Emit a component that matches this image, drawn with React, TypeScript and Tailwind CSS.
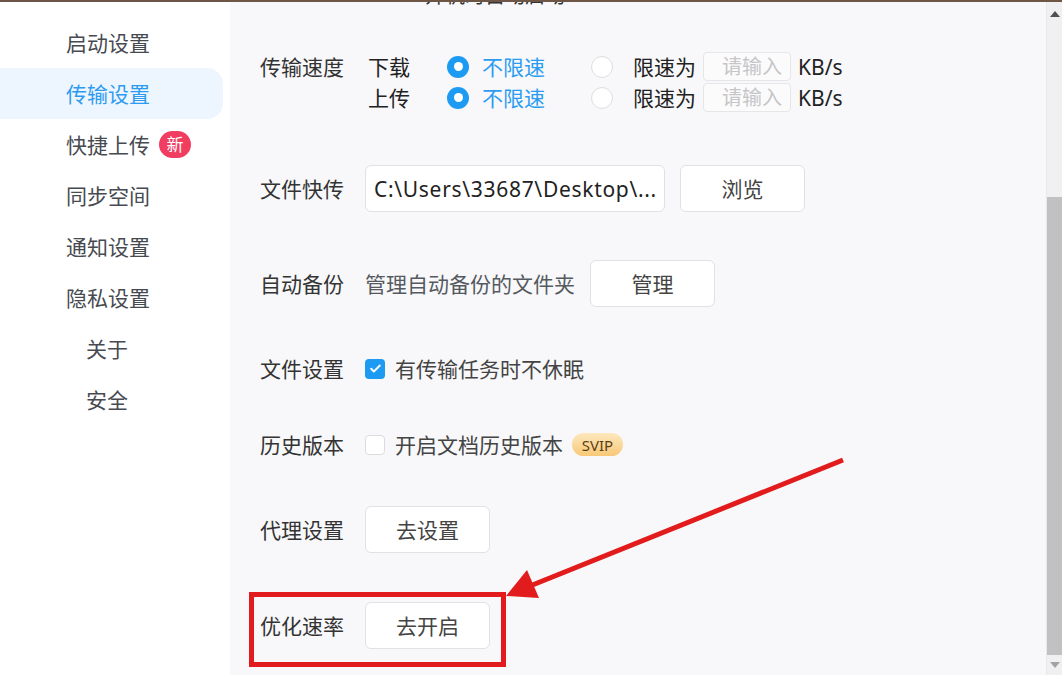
import React from 'react';

const font = { fontFamily: '"Noto Sans", "Noto Sans CJK SC", sans-serif' };

const navItems = [
  { label: '启动设置' },
  { label: '传输设置', active: true },
  { label: '快捷上传', badge: '新' },
  { label: '同步空间' },
  { label: '通知设置' },
  { label: '隐私设置' },
  { label: '关于', sub: true },
  { label: '安全', sub: true },
];

const Radio: React.FC<{ checked?: boolean }> = ({ checked }) =>
  checked ? (
    <span className="w-[22px] h-[22px] rounded-full bg-[#1d9bf3] flex items-center justify-center shrink-0">
      <span className="w-[9px] h-[9px] rounded-full bg-white" />
    </span>
  ) : (
    <span className="w-[22px] h-[22px] rounded-full bg-white border border-[#dedede] shrink-0" />
  );

const Button: React.FC<{ children: React.ReactNode }> = ({ children }) => (
  <div className="w-[125px] h-[47px] rounded-md border border-[#e1e1e4] bg-white flex items-center justify-center text-[21px] text-[#444]">
    {children}
  </div>
);

const Row: React.FC<{ label: string; className?: string; children?: React.ReactNode }> = ({ label, className, children }) => (
  <div className={`flex items-center h-[47px] ${className ?? ''}`}>
    <span className="w-[105px] shrink-0 text-[21px] text-[#333]">{label}</span>
    {children}
  </div>
);

const SpeedLine: React.FC<{ label: string }> = ({ label }) => (
  <div className="flex items-center h-[31px]">
    <span className="w-[79px] ml-[3px] text-[21px] text-[#222]">{label}</span>
    <Radio checked />
    <span className="w-[109px] ml-[13px] text-[21px] text-[#2b9cf2]">不限速</span>
    <Radio />
    <span className="ml-[20px] text-[21px] text-[#222]">限速为</span>
    <div className="ml-[7px] w-[88px] h-[29px] rounded-[4px] border border-[#e6e6e8] bg-[#fbfbfc] whitespace-nowrap pl-[18px] text-[20px] leading-[27px] text-[#c6c6c8]">
      请输入
    </div>
    <span className="ml-[7px] text-[21px] text-[#222]">KB/s</span>
  </div>
);

export default function App() {
  return (
    <div className="w-[1062px] h-[675px] relative overflow-hidden bg-white flex flex-col leading-[24px]" style={font}>
      <div className="h-[2px] bg-[#6e5646] shrink-0" />
      <div className="flex flex-1 min-h-0">
        {/* sidebar */}
        <div className="w-[230px] bg-white shrink-0 pt-[15px] pr-[7px]">
          {navItems.map((item) => (
            <div
              key={item.label}
              className={`h-[51px] flex items-center ${item.sub ? 'pl-[86px]' : 'pl-[66px]'} ${
                item.active ? 'bg-[#edf6ff] rounded-r-2xl text-[#2f9bf0]' : 'text-[#474a50]'
              } text-[21px]`}
            >
              {item.label}
              {item.badge && (
                <span className="ml-[9px] w-[32px] h-[27px] rounded-full bg-[#f13d60] text-white text-[17px] flex items-center justify-center">
                  {item.badge}
                </span>
              )}
            </div>
          ))}
        </div>

        {/* main */}
        <div className="flex-1 bg-[#f8f8fa] pl-[30px] overflow-hidden">
          <div className="mt-[-16px] h-[20px] pl-[165px] text-[20px] leading-[20px] text-[#333]">开机时自动启动</div>

          <div className="flex mt-[45px]">
            <span className="w-[105px] shrink-0 text-[21px] text-[#333] h-[31px] flex items-center">传输速度</span>
            <div className="flex flex-col">
              <SpeedLine label="下载" />
              <SpeedLine label="上传" />
            </div>
          </div>

          <Row label="文件快传" className="mt-[52px]">
            <div className="w-[300px] h-[47px] rounded-md border border-[#e1e1e4] bg-white flex items-center px-[8px] text-[21px] tracking-[0.7px] text-[#222] whitespace-nowrap overflow-hidden">
              C:\Users\33687\Desktop\...
            </div>
            <div className="ml-[15px]">
              <Button>浏览</Button>
            </div>
          </Row>

          <Row label="自动备份" className="mt-[48px]">
            <span className="text-[21px] text-[#555a60]">管理自动备份的文件夹</span>
            <div className="ml-[15px]">
              <Button>管理</Button>
            </div>
          </Row>

          <Row label="文件设置" className="mt-[38px]">
            <span className="w-[20px] h-[20px] rounded-[4px] bg-[#1d9bf3] flex items-center justify-center">
              <svg width="13" height="13" viewBox="0 0 24 24" fill="none" stroke="white" strokeWidth="3.5" strokeLinecap="round" strokeLinejoin="round">
                <path d="M4 12.5l5 5L20 6.5" />
              </svg>
            </span>
            <span className="ml-[10px] text-[21px] text-[#444]">有传输任务时不休眠</span>
          </Row>

          <Row label="历史版本" className="mt-[29px]">
            <span className="w-[20px] h-[20px] rounded-[4px] bg-white border border-[#dcdcdf]" />
            <span className="ml-[10px] text-[21px] text-[#444]">开启文档历史版本</span>
            <span className="ml-[9px] w-[51px] h-[23px] rounded-full bg-gradient-to-b from-[#fde8bd] to-[#f8c877] text-[#5e3f12] text-[15px] flex items-center justify-center">
              SVIP
            </span>
          </Row>

          <Row label="代理设置" className="mt-[38px]">
            <Button>去设置</Button>
          </Row>

          <Row label="优化速率" className="mt-[49px]">
            <Button>去开启</Button>
          </Row>
        </div>

        {/* scrollbar */}
        <div className="w-[16px] shrink-0 bg-[#f0f0f0] border-l border-[#e9e9e9] flex flex-col">
          <div className="h-[24px] flex items-center justify-center">
            <svg width="10" height="6" viewBox="0 0 10 6">
              <path d="M0 6L5 0L10 6Z" fill="#505050" />
            </svg>
          </div>
          <div className="mt-[171px] h-[458px] bg-[#c1c1c1]" />
          <div className="flex-1 flex items-center justify-center">
            <svg width="10" height="6" viewBox="0 0 10 6">
              <path d="M0 0L5 6L10 0Z" fill="#a3a3a3" />
            </svg>
          </div>
        </div>
      </div>

      {/* red annotation */}
      <svg className="absolute inset-0 pointer-events-none" width="1062" height="675" viewBox="0 0 1062 675">
        <rect x="251.5" y="594.5" width="252" height="70" fill="none" stroke="#e21c1c" strokeWidth="5" />
        <line x1="843" y1="460" x2="525" y2="588" stroke="#e21c1c" strokeWidth="5" />
        <path d="M506 596L527 570L539 598Z" fill="#e21c1c" />
      </svg>
    </div>
  );
}
